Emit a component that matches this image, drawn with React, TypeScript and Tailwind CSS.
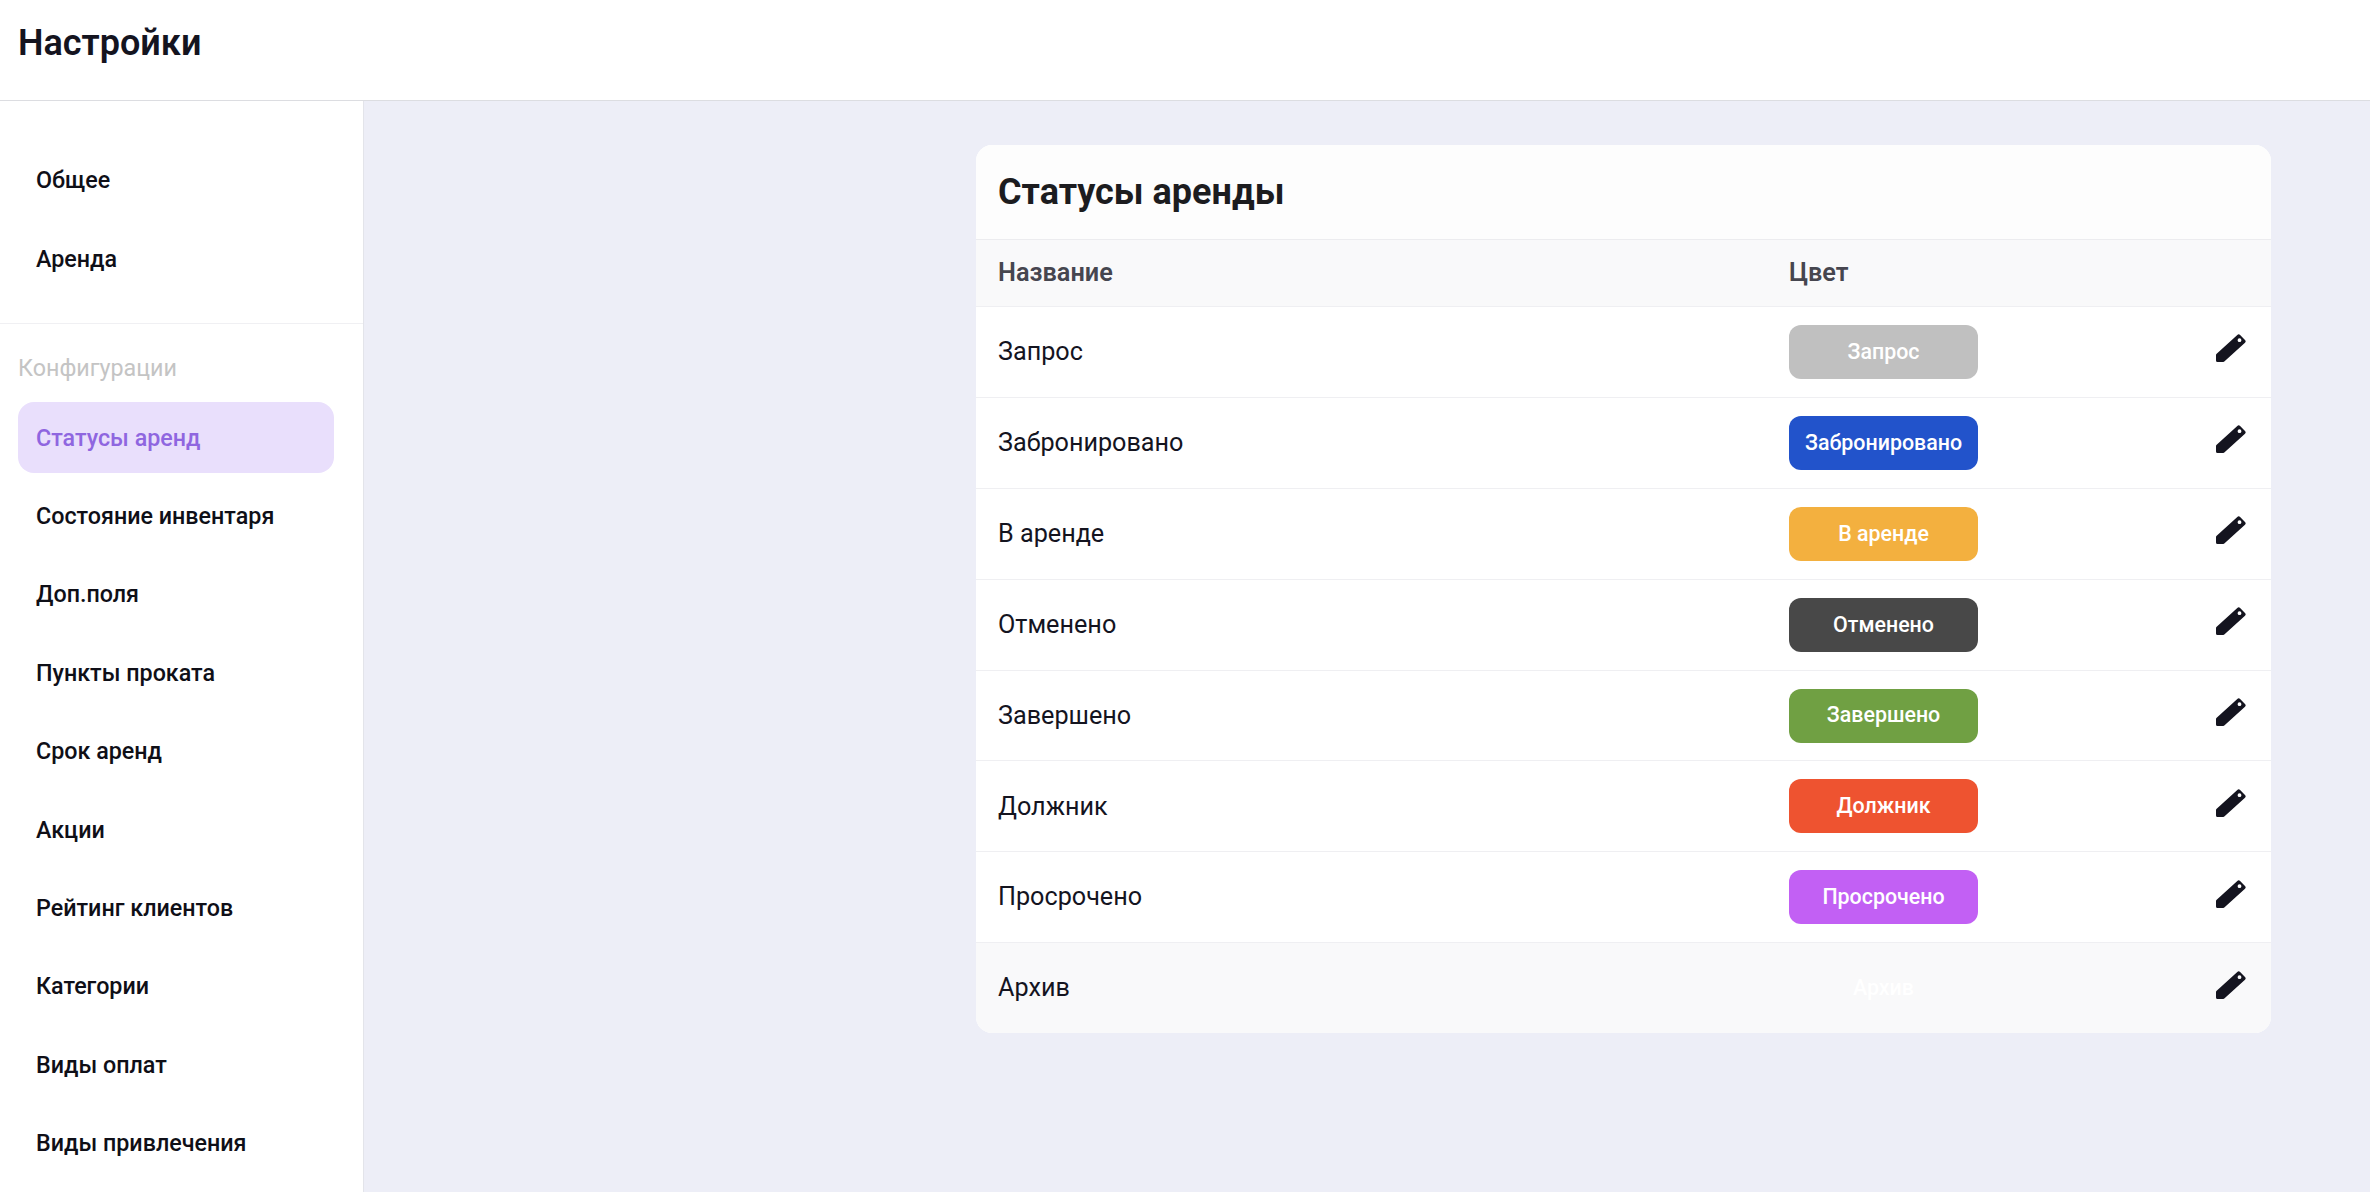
const topNav = ["Общее", "Аренда"];
const configNav = [
  "Состояние инвентаря",
  "Доп.поля",
  "Пункты проката",
  "Срок аренд",
  "Акции",
  "Рейтинг клиентов",
  "Категории",
  "Виды оплат",
  "Виды привлечения",
];

const statuses = [
  { name: "Запрос", badge: "bg-[#c0c0c0]" },
  { name: "Забронировано", badge: "bg-[#2253cb]" },
  { name: "В аренде", badge: "bg-[#f3b03f]" },
  { name: "Отменено", badge: "bg-[#484848]" },
  { name: "Завершено", badge: "bg-[#70a043]" },
  { name: "Должник", badge: "bg-[#ee5330]" },
  { name: "Просрочено", badge: "bg-[#c260f4]" },
  { name: "Архив", badge: "bg-transparent", muted: true },
];

function PencilIcon() {
  return (
    <svg width="30" height="29" viewBox="0 0 30 29" className="shrink-0">
      <path
        fillRule="evenodd"
        fill="#14141f"
        d="M21.3 1a2 2 0 0 1 2.8 0l4.9 4.9a2 2 0 0 1 0 2.8L8.3 27.6a1.5 1.5 0 0 1-1 .4H1.5A1.5 1.5 0 0 1 0 26.5V21a1.5 1.5 0 0 1 .4-1L21.3 1ZM23.5 4.3a1.9 1.9 0 1 0 .02 3.8 1.9 1.9 0 0 0-.02-3.8Z"
      />
    </svg>
  );
}

function NavItem({ label }: { label: string }) {
  return (
    <div className="flex h-[78.4px] items-center pt-[1px] pl-[36px] text-[23.3px] font-medium text-[#0f0f17]">
      {label}
    </div>
  );
}

export default function App() {
  return (
    <div className="flex h-screen flex-col overflow-hidden bg-white font-['Roboto',sans-serif]">
      <header className="flex h-[101px] shrink-0 items-center border-b border-[#dcdde1] pb-[14px] pl-[18px]">
        <h1 className="text-[36px] font-semibold text-[#14141f]">Настройки</h1>
      </header>

      <div className="flex min-h-0 flex-1">
        <aside className="w-[364px] shrink-0 border-r border-[#e3e4ea] bg-white">
          <nav className="pt-[40px] pb-[25px]">
            {topNav.map((label) => (
              <NavItem key={label} label={label} />
            ))}
          </nav>
          <div className="border-t border-[#f0f0f3] px-[18px] pt-[29px]">
            <p className="text-[23.3px] leading-[30px] text-[#c4c4c4]">Конфигурации</p>
            <div className="mt-[19px] flex h-[71px] w-[316px] items-center rounded-[16px] bg-[#e9dffc] pt-[3px] pl-[18px] text-[23.3px] font-medium text-[#8f66e0]">
              Статусы аренд
            </div>
          </div>
          <nav className="mt-[4px]">
            {configNav.map((label) => (
              <NavItem key={label} label={label} />
            ))}
          </nav>
        </aside>

        <main className="flex-1 bg-[#edeef7] pt-[44px] pl-[612px]">
          <section className="w-[1295px] overflow-hidden rounded-[16px] bg-white">
            <h2 className="flex h-[95px] items-center border-b border-[#ececef] bg-[#fdfdfd] pl-[22px] text-[36px] font-bold text-[#1c1c1f]">
              Статусы аренды
            </h2>
            <div className="flex h-[66px] items-center bg-[#f9f9fa] text-[25.3px] font-semibold text-[#46464f]">
              <div className="w-[813px] pl-[22px]">Название</div>
              <div>Цвет</div>
            </div>
            {statuses.map((s) => (
              <div
                key={s.name}
                className={`flex h-[90.9px] items-center border-t border-[#efeff2] text-[25.2px] text-[#14141f] ${s.muted ? "bg-[#f9f9fa]" : "bg-white"}`}
              >
                <div className="w-[813px] pl-[22px]">{s.name}</div>
                <div
                  className={`flex h-[54px] w-[189px] items-center justify-center rounded-[12px] text-[21.4px] font-medium text-white ${s.badge}`}
                >
                  {s.name}
                </div>
                <div className="ml-auto -mt-[6px] mr-[25px]">
                  <PencilIcon />
                </div>
              </div>
            ))}
          </section>
        </main>
      </div>
    </div>
  );
}
